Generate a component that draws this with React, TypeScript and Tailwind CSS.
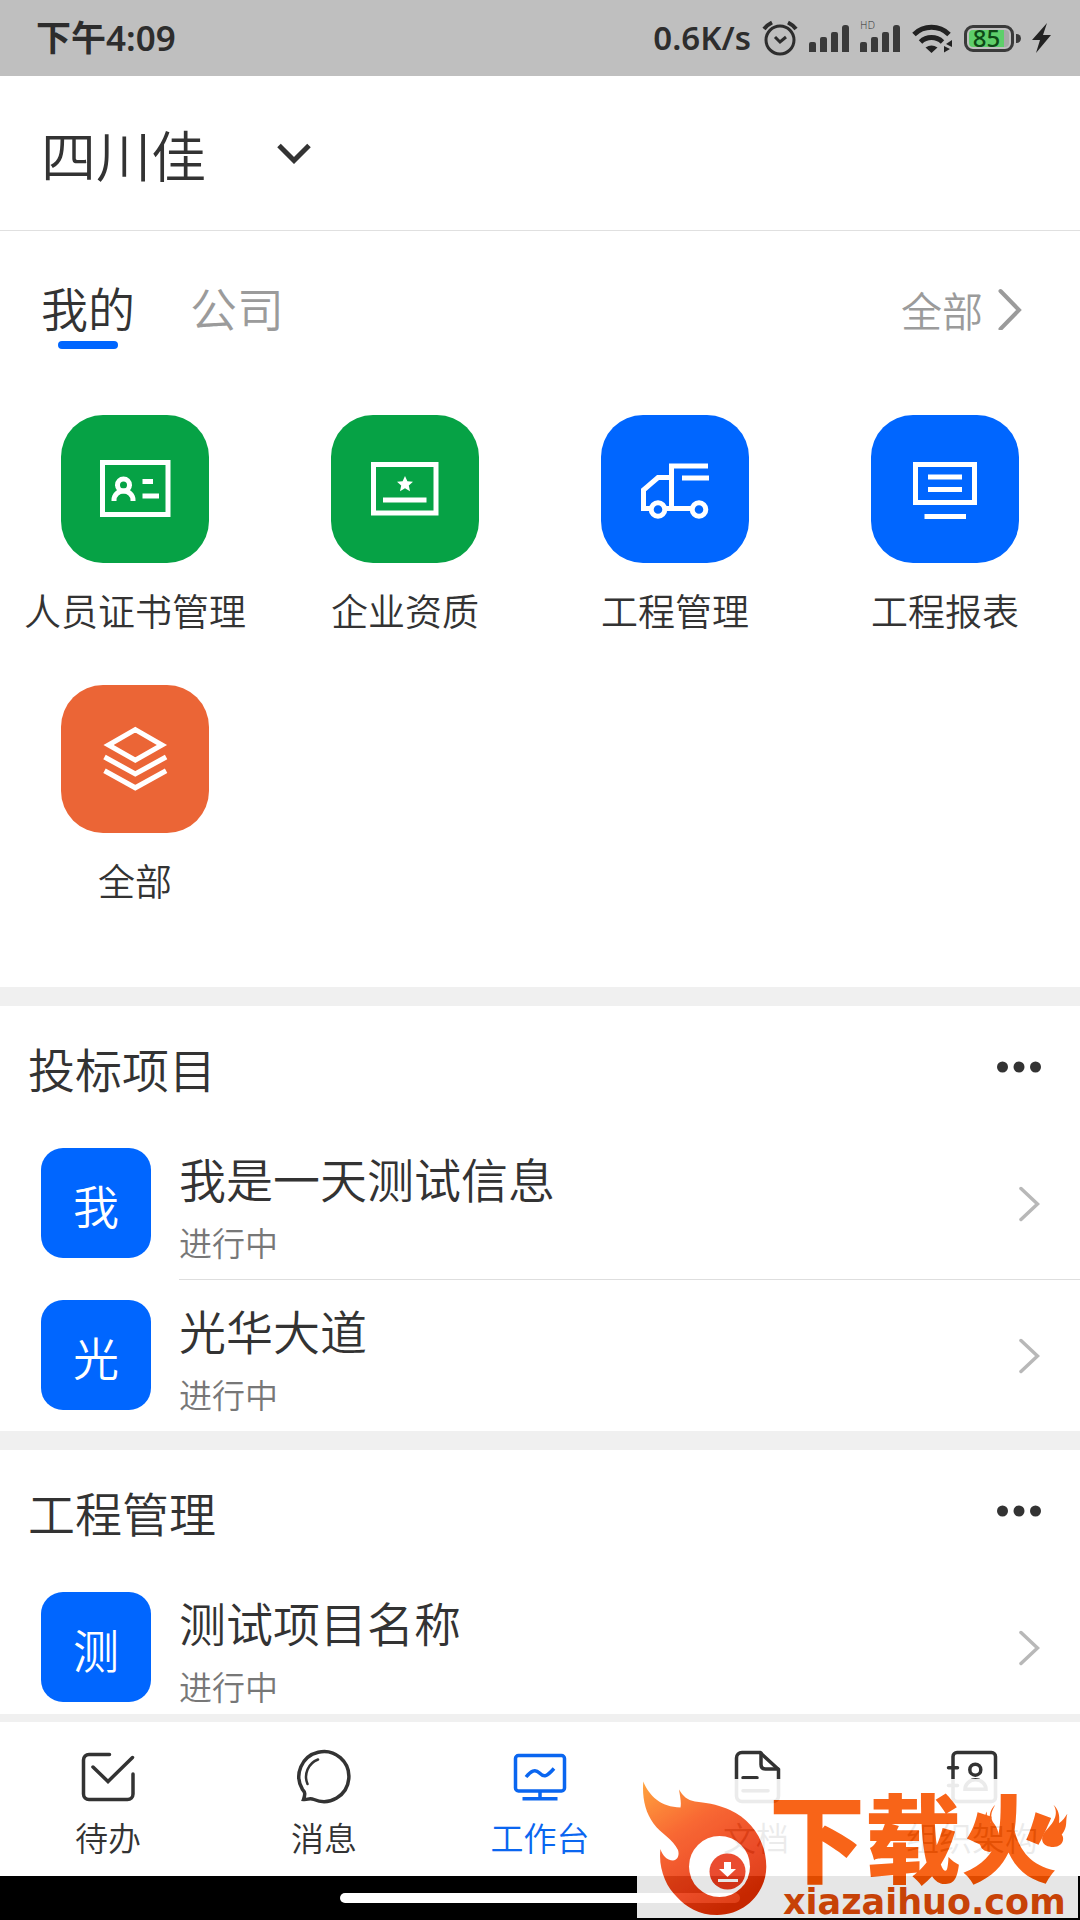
import React from 'react'

type AppItem = { name: string; color: string; icon: React.ReactNode }
type Project = { id: number; name: string; status: string }

const apps: AppItem[] = [
    {
        name: '人员证书管理',
        color: 'bg-[#06a245]',
        icon: (
            <>
                <rect x="41.5" y="47.5" width="65.5" height="52" />
                <circle cx="62.5" cy="70" r="6" />
                <path d="M53 86v-1a9.5 9 0 0 1 19 0v1M81.500 66.500h10.500M81.500 81h16.500" />
            </>
        ),
    },
    {
        name: '企业资质',
        color: 'bg-[#06a245]',
        icon: (
            <>
                <rect x="42.500" y="49.500" width="62.500" height="48.500" />
                <path d="M52 85h43.500" />
                <path
                    d="M74 61l2.400 5.200 5.600.600-4.200 3.800 1.200 5.600-5-2.900-5 2.900 1.200-5.600-4.200-3.800 5.600-.600z"
                    fill="#fff"
                    stroke="none"
                />
            </>
        ),
    },
    {
        name: '工程管理',
        color: 'bg-[#0066ff]',
        icon: (
            <>
                <path d="M50 93.500h-7.500V75L57 62.500h13.500M107 51H70.500v42.500M81 63h27M63 93.500h28" />
                <circle cx="57" cy="94.500" r="6.800" />
                <circle cx="98" cy="94.500" r="6.800" />
            </>
        ),
    },
    {
        name: '工程报表',
        color: 'bg-[#0066ff]',
        icon: (
            <>
                <rect x="44.500" y="49.500" width="59" height="38" />
                <path d="M57 62h34M57 74.500h34M53.500 101.500h41.500" />
            </>
        ),
    },
    {
        name: '全部',
        color: 'bg-[#eb6536]',
        icon: (
            <path d="M74.300 44.700L101 60 74.300 75.200 47.500 60zM43.500 72L74.300 89l30.800-17M43.500 85.800l30.800 17 30.800-17" />
        ),
    },
]

const bids: Project[] = [
    { id: 1, name: '我是一天测试信息', status: '进行中' },
    { id: 2, name: '光华大道', status: '进行中' },
]

const works: Project[] = [{ id: 3, name: '测试项目名称', status: '进行中' }]

const navs = [
    {
        name: '待办',
        icon: <path d="M29.500 5.500H9a5.500 5.500 0 0 0-5.500 5.500v34a5.500 5.500 0 0 0 5.500 5.500h38.500a5.500 5.500 0 0 0 5.500-5.500V25M13 18l15 14.500L52.500 8.500" />,
    },
    {
        name: '消息',
        icon: (
            <>
                <path d="M18 50.500A25 25 0 1 0 6.500 40.500C9 43 9.500 45 7.500 50.500 12 51 13 48.500 18 50.500z" />
                <path d="M22 10.500A18.500 18.500 0 0 0 11.500 35" strokeWidth="2.500" />
            </>
        ),
    },
    {
        name: '工作台',
        active: true,
        icon: (
            <>
                <rect x="3.500" y="6.500" width="49" height="35.500" rx="3" />
                <path d="M28 42v7M10.500 49.700h35M14 28c5-6 9-8.500 13.500-4s7 4 14.500-4.500" strokeLinecap="butt" />
            </>
        ),
    },
    {
        name: '文档',
        icon: (
            <>
                <path d="M32 3.500H14A5.500 5.500 0 0 0 8.500 9v38a5.500 5.500 0 0 0 5.500 5.500h31a5.500 5.500 0 0 0 5.500-5.500V20.500L32 3.500z" />
                <path d="M33 4v11.500q0 4.500 4.500 4.500H50M15 28.700h14M15 41.700h25" />
            </>
        ),
    },
    {
        name: '组织架构',
        icon: (
            <>
                <rect x="9" y="3.500" width="42.500" height="49" rx="4" />
                <circle cx="31.300" cy="20.700" r="5.500" />
                <path d="M4.500 18.700h9M4.500 36.500h9M21 40.300a10.500 9.500 0 0 1 21 0z" />
            </>
        ),
    },
]

function SignalBars() {
    return (
        <svg width="40" height="27" viewBox="0 0 40 27" fill="#3a3a3a">
            <path d="M0 27v-8q0-2 2-2h3q2 0 2 2v8zM11 27V14q0-2 2-2h3q2 0 2 2v13zM22 27V9q0-2 2-2h3q2 0 2 2v18zM33 27V3q0-3 3-3h1q3 0 3 3v24z" />
        </svg>
    )
}

function StatusBar() {
    return (
        <div className="flex h-[76px] shrink-0 items-center justify-between bg-[#bfbfbf] pr-[29px] pl-9 font-['Noto_Sans','Noto_Sans_CJK_SC',sans-serif] text-[#2d2d2d]">
            <span className="text-[35px] font-semibold">下午4:09</span>
            <div className="flex items-center gap-[11px]">
                <span className="text-[33px] font-semibold">0.6K/s</span>
                <svg width="36" height="36" viewBox="0 0 36 36" fill="none" stroke="#2d2d2d" strokeWidth="3">
                    <circle cx="18" cy="20" r="14" />
                    <path d="M13 17l5 5 6-5" />
                    <path d="M2 9q3-4 8-6.500M34 9q-3-4-8-6.500" strokeWidth="4" />
                </svg>
                <SignalBars />
                <span className="relative">
                    <span className="absolute -top-1 left-0 font-['DejaVu_Sans',sans-serif] text-[10px] leading-none">HD</span>
                    <SignalBars />
                </span>
                <svg width="42" height="32" viewBox="0 0 42 32" fill="none" stroke="#222" strokeWidth="5">
                    <path d="M3 12.500a25 25 0 0 1 35 0M9.500 20a16 16 0 0 1 22 0" />
                    <path d="M14.500 25.500q6-4 12 0L20.500 31zM35 22l6-4v7zM33 24l6 3-6 3.500z" fill="#222" stroke="none" />
                </svg>
                <div className="flex items-center gap-0.5">
                    <div className="h-[27px] w-[50px] rounded-[9px] border-[3px] border-[#3a3a3a] p-[2px]">
                        <div className="flex h-full items-center justify-center rounded-[4px] border-r-[5px] border-[#a9a9a9] bg-[#5ecf6a] text-[24px] leading-none font-medium text-[#0d4a16]">
                            85
                        </div>
                    </div>
                    <div className="h-[9px] w-[5px] rounded-r-full bg-[#3a3a3a]" />
                </div>
                <svg width="19" height="30" viewBox="0 0 19 30" fill="#222">
                    <path d="M15 0L0 17h8L4 30l15-18h-8z" />
                </svg>
            </div>
        </div>
    )
}

function ProjectList({ title, projects }: { title: string; projects: Project[] }) {
    return (
        <section className="bg-white">
            <div className="flex h-[122px] items-center justify-between pr-[38px] pl-7">
                <h2 className="pt-0.5 text-[47px] leading-[64px]">{title}</h2>
                <button aria-label="更多">
                    <svg width="46" height="12" viewBox="0 0 46 12" fill="#333">
                        <circle cx="6.500" cy="6" r="5.500" />
                        <circle cx="23" cy="6" r="5.500" />
                        <circle cx="39.500" cy="6" r="5.500" />
                    </svg>
                </button>
            </div>
            <ul>
                {projects.map((project) => (
                    <li key={project.id} className="group">
                        <a href="#" className="flex gap-7 pl-[41px]">
                            <span className="mt-5 flex size-[110px] shrink-0 items-center justify-center rounded-[22px] bg-[#0066ff] text-[46px] text-white">
                                <span className="pt-0.5">{project.name[0]}</span>
                            </span>
                            <span className="flex min-h-[152px] flex-1 items-center justify-between border-b border-[#dedede] pr-10 group-last:min-h-[151px] group-last:border-b-0">
                                <span className="flex flex-col gap-2 pt-1">
                                    <span className="text-[47px] leading-[64px]">{project.name}</span>
                                    <span className="text-[33px] leading-[48px] text-[#777]">{project.status}</span>
                                </span>
                                <svg width="22" height="36" viewBox="0 0 22 36" fill="none" stroke="#b8b8b8" strokeWidth="3.500" strokeLinecap="round">
                                    <path d="M3 2.500l16.500 15.500L3 33.500" />
                                </svg>
                            </span>
                        </a>
                    </li>
                ))}
            </ul>
        </section>
    )
}

function SiteBadge() {
    return (
        <div className="pointer-events-none absolute right-[2px] bottom-[2px] flex h-[139px] w-[441px] bg-white opacity-90">
            <svg width="132" height="139" viewBox="0 0 132 139" className="shrink-0">
                <defs>
                    <linearGradient id="fire" x1="0" y1="0" x2="0.6" y2="1">
                        <stop offset="0" stopColor="#ff9a2a" />
                        <stop offset="0.4" stopColor="#f8581e" />
                        <stop offset="0.75" stopColor="#ea3a12" />
                        <stop offset="1" stopColor="#dc2c00" />
                    </linearGradient>
                </defs>
                <path
                    d="M6.300 2.500C12 17 24 28 43.500 28.500 44.500 23 43 17 42 10.500 46 17 50 21 58 22.500 74 24 84 27 93 31 113 40 129 60 129.300 87.700 129 114 108 136 80 136 62 136 49 128 39.700 117.700 29 108 21 89 23.500 70 25 76 30 81.500 36 81.500 41 81 42.500 76 41 71 36 60 24 55 16.500 44.500 8 33 5 18 6.300 2.500z"
                    fill="url(#fire)"
                />
                <circle cx="82.500" cy="87.500" r="30.500" fill="#fff" />
                <circle cx="90.500" cy="92.500" r="18" fill="#e8391a" />
                <path d="M87 83h7v7h5l-8.500 8-8.500-8h5zM81 100h20v3H81z" fill="#fff" />
            </svg>
            <div className="text-[#f85400]">
                <div className="text-[96px] leading-[110px] font-black whitespace-nowrap">下载火</div>
                <div className="pl-[14px] font-['DejaVu_Sans',sans-serif] text-[35px] leading-[26px] font-bold text-[#dd4a08]">xiazaihuo.com</div>
            </div>
            {/* small flames on both sides of 火 */}
            <svg width="93" height="50" viewBox="650 40 280 150" fill="#f85400" className="absolute top-6 right-2">
                <path d="M705 45C690 70 690 85 700 100 725 130 722 185 688 187 655 185 650 150 672 125 680 100 668 80 680 65 678 85 684 95 690 100 685 75 690 60 705 45z" />
                <path d="M880 45C900 75 875 105 860 120 835 145 845 172 880 172 915 170 912 140 905 135 925 110 915 95 922 72 910 90 905 95 897 100 900 75 895 60 880 45z" />
            </svg>
        </div>
    )
}

function App() {
    return (
        <div className="flex h-screen flex-col bg-white font-['Noto_Sans_CJK_SC',sans-serif] font-[350] text-[#333]">
            <StatusBar />
            <header className="flex h-[155px] shrink-0 items-center border-b border-[#e0e0e0] pl-[41px]">
                <label className="flex items-center">
                    <select aria-label="公司" className="w-[236px] appearance-none bg-transparent text-[55px] leading-[80px] outline-none">
                        <option>四川佳</option>
                    </select>
                    <svg width="34" height="22" viewBox="0 0 34 22" fill="none" stroke="#333" strokeWidth="5">
                        <path d="M2 3.500l15 15 15-15" />
                    </svg>
                </label>
            </header>

            <main className="min-h-0 flex-1 overflow-y-auto bg-[#f0f0f0] [scrollbar-width:none]">
                <section className="bg-white pb-[83px]">
                    <div className="flex items-start justify-between pt-12 pr-[58px] pl-[41px]">
                        <div className="flex gap-[55px] text-[47px] leading-[56px]">
                            <button className="flex flex-col items-center gap-1.5">
                                我的
                                <span className="h-2 w-[60px] rounded-full bg-[#0066ff]" />
                            </button>
                            <button className="self-start text-[#9b9b9b]">公司</button>
                        </div>
                        <a href="#" className="flex items-center gap-[15px] text-[41px] leading-[60px] text-[#9b9b9b]">
                            全部
                            <svg width="24" height="42" viewBox="0 0 24 42" fill="none" stroke="#9b9b9b" strokeWidth="4" strokeLinecap="round">
                                <path d="M2.500 3L21 22 2.500 41" />
                            </svg>
                        </a>
                    </div>
                    <div className="mt-[66px] grid grid-cols-4 gap-y-[51px]">
                        {apps.map((app) => (
                            <a key={app.name} href="#" className="flex flex-col items-center gap-[23px]">
                                <span className={`size-[148px] rounded-[42px] ${app.color}`}>
                                    <svg width="148" height="148" viewBox="0 0 148 148" fill="none" stroke="#fff" strokeWidth="5">
                                        {app.icon}
                                    </svg>
                                </span>
                                <span className="text-[37px] leading-[48px] whitespace-nowrap">{app.name}</span>
                            </a>
                        ))}
                    </div>
                </section>
                <div className="h-[19px]" />
                <ProjectList title="投标项目" projects={bids} />
                <div className="h-[19px]" />
                <ProjectList title="工程管理" projects={works} />
            </main>

            <footer className="relative shrink-0">
                <nav className="grid grid-cols-5 border-t-8 border-[#f0f0f0] bg-white pt-[27px] pb-[15px]">
                    {navs.map((nav) => (
                        <a key={nav.name} href="#" className={`flex flex-col items-center gap-2 ${nav.active ? 'text-[#0a66f0]' : 'text-[#333]'}`}>
                            <svg width="56" height="56" viewBox="0 0 56 56" fill="none" stroke="currentColor" strokeWidth="3.500" strokeLinecap="round">
                                {nav.icon}
                            </svg>
                            <span className="text-[33px] leading-[48px]">{nav.name}</span>
                        </a>
                    ))}
                </nav>
                {/* gesture bar */}
                <div className="flex h-11 items-center justify-center bg-black">
                    <div className="h-[10px] w-[400px] rounded-full bg-white" />
                </div>
                <SiteBadge />
            </footer>
        </div>
    )
}

export default App
